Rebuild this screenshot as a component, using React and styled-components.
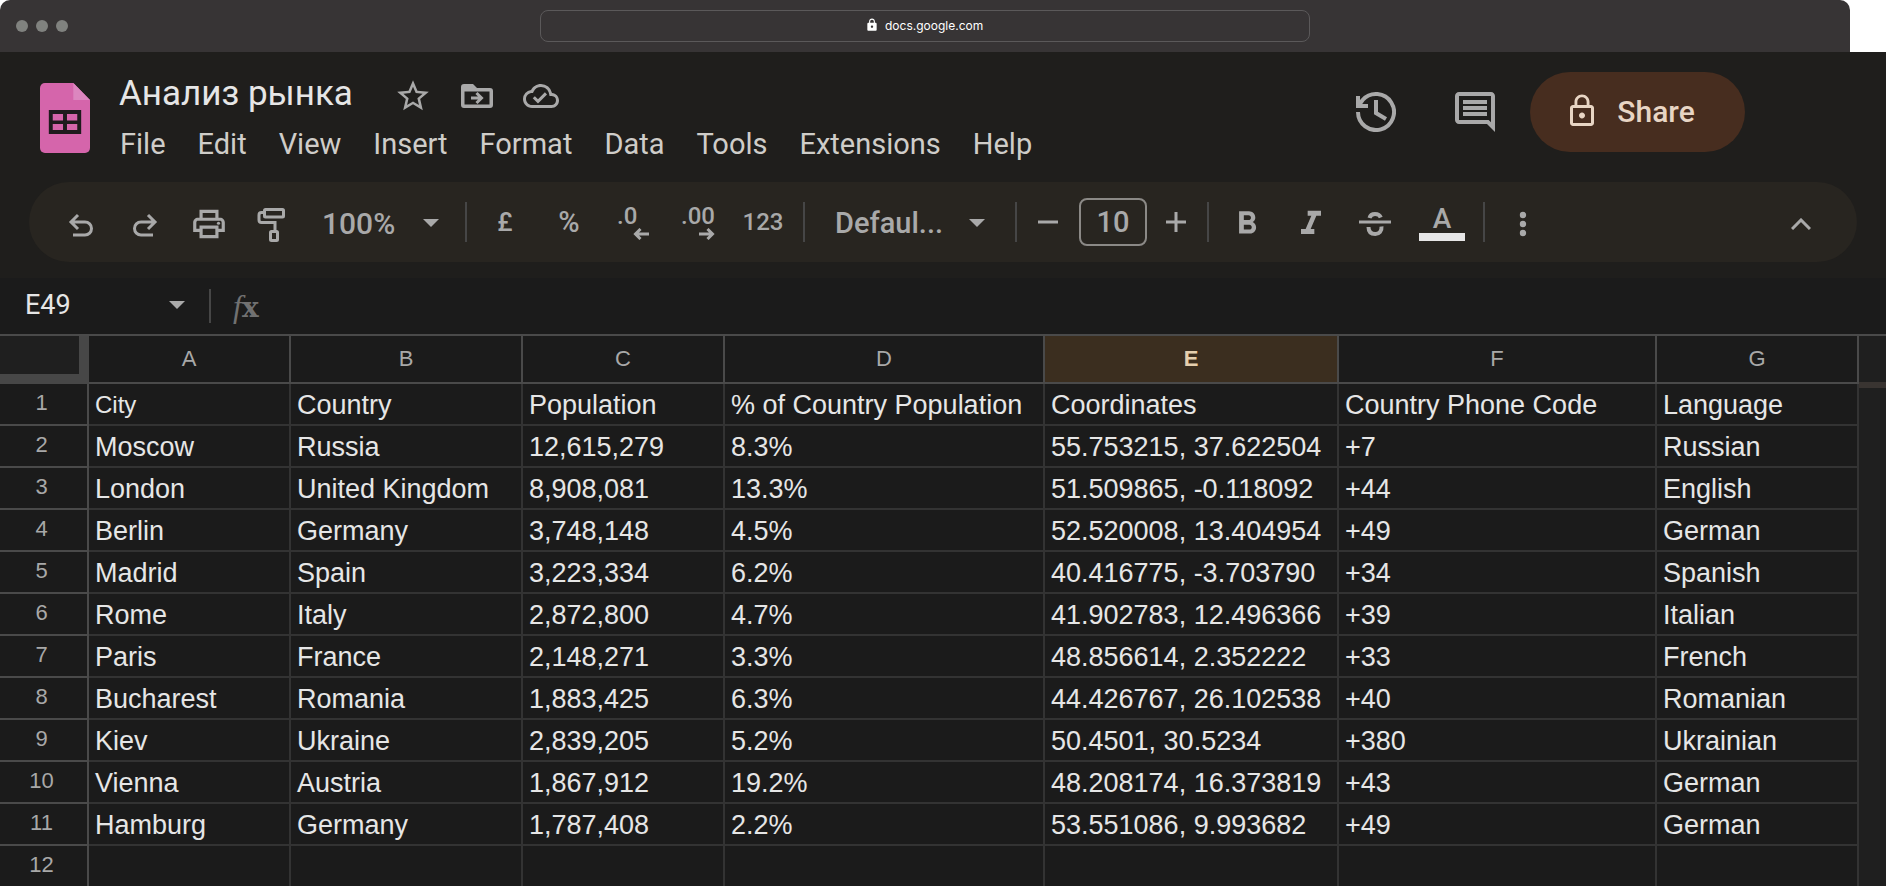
import React from "react";
import styled, { createGlobalStyle } from "styled-components";
import {
  MdStarBorder,
  MdOutlineCloudDone,
  MdOutlineComment,
  MdLockOutline,
  MdOutlinePrint,
  MdFormatBold,
  MdFormatItalic,
  MdLock,
} from "react-icons/md";

const color = {
  chrome: "#373435",
  header: "#1f1e1c",
  toolbar: "#282520",
  sheet: "#1b1b1b",
  icon: "#a9a9a9",
  text: "#e6e6e6",
  menu: "#cfcdc9",
  headLine: "#4a4a4a",
  line: "#333333",
};
const ui = `Roboto, "Open Sans", sans-serif`;
const cellFont = `"Liberation Sans", Arial, sans-serif`;

const GlobalStyle = createGlobalStyle`
  * { box-sizing: border-box; }
  body { margin: 0; background: #fff; }
  button, input, select { font: inherit; color: inherit; background: none; border: 0; padding: 0; margin: 0; outline: none; }
  svg { display: block; flex: none; }
`;

const Page = styled.div`
  height: 100vh;
  overflow: hidden;
  display: flex;
  flex-direction: column;
  font-family: ${ui};
`;

const BrowserBar = styled.div`
  flex: none;
  display: grid;
  grid-template-columns: 1fr minmax(0, 770px) 1fr;
  align-items: center;
  height: 52px;
  margin-right: 36px;
  padding: 0 16px;
  border-radius: 10px 10px 0 0;
  background: ${color.chrome};
`;
const Lights = styled.div`
  display: flex;
  gap: 8px;
`;
const Light = styled.span`
  width: 12px;
  height: 12px;
  border-radius: 50%;
  background: #80827f;
`;
const Address = styled.label`
  display: flex;
  align-items: center;
  justify-content: center;
  gap: 6px;
  height: 32px;
  padding-bottom: 2px;
  border: 1px solid #5b595a;
  border-radius: 8px;
  color: #fff;
  font-family: Inter, sans-serif;
  font-size: 12px;
`;
const AddressInput = styled.input`
  width: 100px;
`;

const Header = styled.header`
  flex: none;
  display: flex;
  height: 130px;
  padding: 18px 141px 0 40px;
  background: ${color.header};
`;
const LogoLink = styled.a`
  margin: 13px 29px 0 0;
`;
const DocInfo = styled.div`
  flex: 1;
  min-width: 0;
`;
const TitleRow = styled.div`
  display: flex;
  align-items: center;
  height: 52px;
  color: ${color.icon};
`;
const Title = styled.h1`
  width: 262px;
  margin: 0;
  padding-bottom: 4px;
  font-size: 35px;
  line-height: 48px;
  font-weight: 400;
  white-space: nowrap;
  color: ${color.text};
`;
const IconButton = styled.button`
  display: flex;
  align-items: center;
  justify-content: center;
  flex: none;
  width: ${(p) => p.$w || 64}px;
  height: ${(p) => p.$h || 52}px;
  color: ${color.icon};
`;
const MenuBar = styled.nav`
  display: flex;
  gap: 32px;
  padding: 4px 0 0 1px;
`;
const MenuButton = styled.button`
  font-size: 29px;
  line-height: 36px;
  color: ${color.menu};
`;
const Actions = styled.div`
  display: flex;
  align-items: center;
  height: 80px;
  margin-top: 2px;
`;
const ShareButton = styled.button`
  display: flex;
  align-items: center;
  justify-content: center;
  gap: 17px;
  width: 215px;
  height: 80px;
  margin-left: 5px;
  padding: 0 16px 2px 0;
  border-radius: 40px;
  background: #472d1f;
  color: #e8d5c4;
  font-size: 30px;
  font-weight: 500;
`;

const ToolbarArea = styled.div`
  flex: none;
  padding: 0 29px 16px;
  background: ${color.header};
`;
const Toolbar = styled.div`
  display: flex;
  align-items: center;
  height: 80px;
  padding: 0 24px 0 20px;
  border-radius: 40px;
  background: ${color.toolbar};
  color: ${color.icon};
`;
const Tool = styled.button`
  display: flex;
  align-items: center;
  justify-content: center;
  flex: none;
  width: ${(p) => p.$w || 64}px;
  height: 64px;
  padding-top: ${(p) => (p.$low ? 4 : 0)}px;
  font-size: ${(p) => p.$size || 24}px;
  font-weight: 500;
`;
const Divider = styled.span`
  flex: none;
  width: 2px;
  height: ${(p) => p.$h || 40}px;
  margin: 0 6px;
  background: #464646;
`;
const Spacer = styled.span`
  flex: 1;
`;
const Dropdown = styled.label`
  display: grid;
  align-items: center;
  flex: none;
  width: ${(p) => p.$w}px;
  padding: 2px ${(p) => p.$right}px 0 ${(p) => p.$left}px;
  font-size: ${(p) => p.$size}px;
  font-weight: 500;

  & > * { grid-area: 1 / 1; }
  & > svg { justify-self: end; pointer-events: none; }
`;
const Select = styled.select`
  appearance: none;
  height: 48px;
`;
const SizeInput = styled.input`
  flex: none;
  width: 68px;
  height: 48px;
  margin: 0 4px 0 6px;
  border: 2px solid #8b8986;
  border-radius: 8px;
  font-size: 29px;
  font-weight: 500;
  text-align: center;
`;
const Decimals = styled.span`
  display: grid;
  width: 32px;
  font-size: 24px;
  line-height: 24px;
  text-align: left;

  & > svg { justify-self: end; }
`;
const TextColor = styled.span`
  display: flex;
  flex-direction: column;
  align-items: center;
  width: 46px;
  padding-top: 2px;
  border-bottom: 8px solid #e6e6e6;
  font-size: 28px;
  line-height: 28px;
`;

const FormulaBar = styled.div`
  flex: none;
  display: flex;
  align-items: center;
  height: 58px;
  border-bottom: 2px solid ${color.headLine};
  background: ${color.sheet};
  color: ${color.icon};
`;
const NameBox = styled.label`
  display: flex;
  align-items: center;
  width: 203px;
  padding: 0 18px 2px 25px;
`;
const NameInput = styled.input`
  flex: 1;
  min-width: 0;
  font-size: 27px;
  color: ${color.text};
`;
const Fx = styled.span`
  display: flex;
  align-items: baseline;
  margin-left: 16px;
  padding-top: 2px;
  font-family: "DejaVu Serif", serif;
  font-size: 28px;
  line-height: 36px;
  font-weight: 700;
  color: #717171;
`;
const FxF = styled.i`
  font-family: "Liberation Serif", serif;
  font-size: 32px;
  font-weight: 400;
`;
const FormulaInput = styled.input`
  flex: 1;
  font-size: 27px;
`;

const SheetArea = styled.main`
  flex: 1;
  min-height: 0;
  display: flex;
  background: ${color.sheet};
`;
const SheetView = styled.div`
  flex: 1;
  min-width: 0;
  overflow: hidden;
`;
const Grid = styled.table`
  width: 100%;
  table-layout: fixed;
  border-collapse: separate;
  border-spacing: 0;
  font-family: ${cellFont};
`;
const Col = styled.col`
  width: ${(p) => (p.$w ? `${p.$w}px` : "auto")};
`;
const Corner = styled.td`
  padding: 0;
  border: solid #474747;
  border-width: 0 10px 10px 0;
  background: #1f1f1f;
`;
const ColHead = styled.th`
  height: 48px;
  padding: 0;
  border-right: 2px solid ${color.headLine};
  border-bottom: 2px solid ${color.headLine};
  background: ${(p) => (p.$active ? "#3b2e1f" : color.sheet)};
  color: ${(p) => (p.$active ? "#e5cfae" : "#a8a8a8")};
  font-size: 22px;
  line-height: 24px;
  font-weight: ${(p) => (p.$active ? 700 : 400)};
`;
const RowHead = styled.th`
  height: 42px;
  padding: 0 4px 2px 0;
  border-right: 2px solid ${color.headLine};
  border-bottom: 2px solid ${color.headLine};
  color: #a8a8a8;
  font-size: 22px;
  line-height: 24px;
  font-weight: 400;
`;
const Cell = styled.td`
  height: 42px;
  padding: 2px 0 0 6px;
  border-right: 2px solid ${color.line};
  border-bottom: 2px solid ${color.line};
  overflow: hidden;
  white-space: nowrap;
  color: ${color.text};
  font-size: ${(p) => (p.$small ? 24 : 27)}px;
  line-height: 32px;
`;
const ScrollTrack = styled.div`
  flex: none;
  width: 27px;
  background: #1f1f1f;
`;
const ScrollHead = styled.div`
  height: 52px;
  border-bottom: 6px solid #393431;
`;

const Svg = ({ w = 40, h = 40, sw = 4, children }) => (
  <svg width={w} height={h} viewBox={`0 0 ${w} ${h}`} fill="none" stroke="currentColor" strokeWidth={sw} aria-hidden="true">
    {children}
  </svg>
);
const Logo = () => (
  <svg width="50" height="70" viewBox="0 0 51 70" preserveAspectRatio="none" aria-hidden="true">
    <path d="M5 0h29l17 17v48a5 5 0 0 1-5 5H5a5 5 0 0 1-5-5V5a5 5 0 0 1 5-5z" fill="#d565ab" />
    <path d="M34 0l17 17H34z" fill="#dc86bf" />
    <path fillRule="evenodd" d="M9 27h33v24H9zM13 31v6.500h10.500V31zM27.500 31v6.500H38V31zM13 41v6h10.500v-6zM27.500 41v6H38v-6z" fill="#1f1b1d" />
  </svg>
);
const FolderMove = () => (
  <svg width="32" height="24" viewBox="0 0 32 24" aria-hidden="true">
    <path fill="currentColor" fillRule="evenodd" d="M3 0h9l4 4h13a3 3 0 0 1 3 3v14a3 3 0 0 1-3 3H3a3 3 0 0 1-3-3V3a3 3 0 0 1 3-3zM3.500 7.500v13h25v-13z" />
    <path d="M10 14h10M15.500 9l5 5-5 5" fill="none" stroke="currentColor" strokeWidth="3" />
  </svg>
);
const HistoryIcon = () => (
  <Svg>
    <path d="M2 20a18 18 0 1 0 4.600-12L3 13" />
    <path d="M2 4v10h10" />
    <path d="M20 8v13l10 6" />
  </Svg>
);
const Undo = () => (
  <Svg sw={3}>
    <path d="M17 13l-7 7 7 7M10 20h14a6.500 6.500 0 0 1 0 13H12" />
  </Svg>
);
const Redo = () => (
  <Svg sw={3}>
    <path d="M23 13l7 7-7 7M30 20H16a6.500 6.500 0 0 0 0 13h12" />
  </Svg>
);
const PaintRoller = () => (
  <Svg sw={3}>
    <rect x="11.500" y="7.500" width="19" height="7.500" rx="1" />
    <path d="M11 10.500H8.500A2.500 2.500 0 0 0 6 13v5a2.500 2.500 0 0 0 2.500 2.500h13.500V29" />
    <rect x="17.500" y="29.500" width="7" height="9" rx="1" />
  </Svg>
);
const Strike = () => (
  <Svg>
    <path d="M4 20h32" strokeWidth="3" />
    <path d="M14.500 16c.8-3 3-4 5.500-4s4.800 1 5.800 3.500M13.500 25c0 5 3 7 6.800 7s6.700-3 6.200-7.500" />
  </Svg>
);
const Caret = () => (
  <svg width="16" height="8" viewBox="0 0 16 8" aria-hidden="true">
    <path d="M0 0h16L8 8z" fill="currentColor" />
  </svg>
);
const Minus = () => <Svg w={20} h={20} sw={3}><path d="M0 10h20" /></Svg>;
const Plus = () => <Svg w={20} h={20} sw={3}><path d="M0 10h20M10 0v20" /></Svg>;
const ArrowLeft = () => <Svg w={16} h={12} sw={3}><path d="M16 6H2M7.500 1l-5 5 5 5" /></Svg>;
const ArrowRight = () => <Svg w={16} h={12} sw={3}><path d="M0 6h14M8.500 1l5 5-5 5" /></Svg>;
const More = () => (
  <svg width="8" height="26" viewBox="0 0 8 26" fill="currentColor" aria-hidden="true">
    <circle cx="4" cy="4" r="3.200" /><circle cx="4" cy="13" r="3.200" /><circle cx="4" cy="22" r="3.200" />
  </svg>
);
const ChevronUp = () => <Svg w={20} h={12} sw={3}><path d="M1 11l9-9 9 9" /></Svg>;

const menus = ["File", "Edit", "View", "Insert", "Format", "Data", "Tools", "Extensions", "Help"];
const columns = [
  ["A", 202], ["B", 232], ["C", 202], ["D", 320], ["E", 294], ["F", 318], ["G", 0],
];
const rows = [
  ["City", "Country", "Population", "% of Country Population", "Coordinates", "Country Phone Code", "Language"],
  ["Moscow", "Russia", "12,615,279", "8.3%", "55.753215, 37.622504", "+7", "Russian"],
  ["London", "United Kingdom", "8,908,081", "13.3%", "51.509865, -0.118092", "+44", "English"],
  ["Berlin", "Germany", "3,748,148", "4.5%", "52.520008, 13.404954", "+49", "German"],
  ["Madrid", "Spain", "3,223,334", "6.2%", "40.416775, -3.703790", "+34", "Spanish"],
  ["Rome", "Italy", "2,872,800", "4.7%", "41.902783, 12.496366", "+39", "Italian"],
  ["Paris", "France", "2,148,271", "3.3%", "48.856614, 2.352222", "+33", "French"],
  ["Bucharest", "Romania", "1,883,425", "6.3%", "44.426767, 26.102538", "+40", "Romanian"],
  ["Kiev", "Ukraine", "2,839,205", "5.2%", "50.4501, 30.5234", "+380", "Ukrainian"],
  ["Vienna", "Austria", "1,867,912", "19.2%", "48.208174, 16.373819", "+43", "German"],
  ["Hamburg", "Germany", "1,787,408", "2.2%", "53.551086, 9.993682", "+49", "German"],
  ["", "", "", "", "", "", ""],
];

export default function App() {
  return (
    <Page>
      <GlobalStyle />
      <BrowserBar>
        <Lights><Light /><Light /><Light /></Lights>
        <Address>
          <MdLock size={14} aria-hidden="true" />
          <AddressInput defaultValue="docs.google.com" aria-label="Address" />
        </Address>
      </BrowserBar>

      <Header>
        <LogoLink href="#" aria-label="Sheets home"><Logo /></LogoLink>
        <DocInfo>
          <TitleRow>
            <Title>Анализ рынка</Title>
            <IconButton aria-label="Star"><MdStarBorder size={38} /></IconButton>
            <IconButton aria-label="Move"><FolderMove /></IconButton>
            <IconButton aria-label="Saved to cloud"><MdOutlineCloudDone size={36} /></IconButton>
          </TitleRow>
          <MenuBar>
            {menus.map((m) => <MenuButton key={m}>{m}</MenuButton>)}
          </MenuBar>
        </DocInfo>
        <Actions>
          <IconButton $w={98} $h={80} aria-label="Version history"><HistoryIcon /></IconButton>
          <IconButton $w={100} $h={80} aria-label="Comments"><MdOutlineComment size={48} /></IconButton>
          <ShareButton><MdLockOutline size={36} />Share</ShareButton>
        </Actions>
      </Header>

      <ToolbarArea>
        <Toolbar role="toolbar">
          <Tool aria-label="Undo"><Undo /></Tool>
          <Tool aria-label="Redo"><Redo /></Tool>
          <Tool $low aria-label="Print"><MdOutlinePrint size={38} /></Tool>
          <Tool aria-label="Paint format"><PaintRoller /></Tool>
          <Dropdown $w={154} $left={17} $right={20} $size={30}>
            <Select aria-label="Zoom"><option>100%</option></Select>
            <Caret />
          </Dropdown>
          <Divider />
          <Tool $size={26} aria-label="Currency">£</Tool>
          <Tool $size={29} aria-label="Percent">%</Tool>
          <Tool aria-label="Decrease decimals"><Decimals>.0<ArrowLeft /></Decimals></Tool>
          <Tool aria-label="Increase decimals"><Decimals>.00<ArrowRight /></Decimals></Tool>
          <Tool $w={68} aria-label="Number format">123</Tool>
          <Divider />
          <Dropdown $w={198} $left={24} $right={24} $size={29}>
            <Select aria-label="Font"><option>Defaul...</option></Select>
            <Caret />
          </Dropdown>
          <Divider />
          <Tool $w={50} aria-label="Decrease font size"><Minus /></Tool>
          <SizeInput aria-label="Font size" defaultValue="10" />
          <Tool $w={50} aria-label="Increase font size"><Plus /></Tool>
          <Divider />
          <Tool $low aria-label="Bold"><MdFormatBold size={38} /></Tool>
          <Tool $low aria-label="Italic"><MdFormatItalic size={40} /></Tool>
          <Tool aria-label="Strikethrough"><Strike /></Tool>
          <Tool $w={70} aria-label="Text colour"><TextColor>A</TextColor></Tool>
          <Divider />
          <Tool $low aria-label="More"><More /></Tool>
          <Spacer />
          <Tool $low aria-label="Hide menus"><ChevronUp /></Tool>
        </Toolbar>
      </ToolbarArea>

      <FormulaBar>
        <NameBox>
          <NameInput aria-label="Name box" defaultValue="E49" />
          <Caret />
        </NameBox>
        <Divider $h={34} />
        <Fx><FxF>f</FxF>x</Fx>
        <FormulaInput aria-label="Formula" />
      </FormulaBar>

      <SheetArea>
        <SheetView>
          <Grid>
            <colgroup>
              <Col $w={89} />
              {columns.map(([name, w]) => <Col key={name} $w={w} />)}
            </colgroup>
            <thead>
              <tr>
                <Corner />
                {columns.map(([name]) => (
                  <ColHead key={name} scope="col" $active={name === "E"}>{name}</ColHead>
                ))}
              </tr>
            </thead>
            <tbody>
              {rows.map((row, r) => (
                <tr key={r}>
                  <RowHead scope="row">{r + 1}</RowHead>
                  {row.map((value, c) => (
                    <Cell key={c} $small={r === 0 && c === 0}>{value}</Cell>
                  ))}
                </tr>
              ))}
            </tbody>
          </Grid>
        </SheetView>
        <ScrollTrack><ScrollHead /></ScrollTrack>
      </SheetArea>
    </Page>
  );
}
